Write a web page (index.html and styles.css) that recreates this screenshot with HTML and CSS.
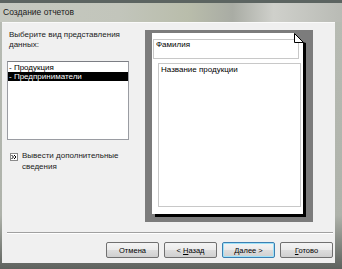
FILE: index.html
```html
<!DOCTYPE html>
<html lang="ru">
<head>
    <meta charset="UTF-8">
    <title>Создание отчетов</title>
    <link rel="stylesheet" href="styles.css">
</head>
<body>
    <div class="window">
        <div class="titlebar">Создание отчетов</div>
        <div class="client">
            <div class="main">
                <div class="left">
                    <div class="prompt">Выберите вид представления данных:</div>
                    <ul class="listbox">
                        <li>- Продукция</li>
                        <li class="selected">- Предприниматели</li>
                    </ul>
                    <div class="more">
                        <span class="more-btn">
                            <svg width="8" height="8" viewBox="0 0 8 8">
                                <path d="M1.5 2 L3.5 4 L1.5 6 M4 2 L6 4 L4 6" fill="none" stroke="#000" stroke-width="1"/>
                            </svg>
                        </span>
                        <span class="more-text">Вывести дополнительные сведения</span>
                    </div>
                </div>
                <div class="preview">
                    <div class="paper">
                        <div class="field-head">Фамилия</div>
                        <div class="field-body">Название продукции</div>
                    </div>
                    <!-- folded corner of the page -->
                    <svg class="dog-ear" width="16" height="18" viewBox="0 0 16 18">
                        <polygon points="2,3 14,3 14,13 11,12" fill="#7c7c7c"/>
                        <polygon points="2.5,3.5 2.5,12.5 11.5,12.5" fill="#fff" stroke="#000" stroke-width="1"/>
                    </svg>
                </div>
            </div>
            <div class="separator"></div>
            <div class="buttons">
                <button>Отмена</button>
                <button>&lt; <u>Н</u>азад</button>
                <button class="default"><u>Д</u>алее &gt;</button>
                <button><u>Г</u>отово</button>
            </div>
        </div>
    </div>
</body>
</html>
```

FILE: styles.css
```css
body {
    margin: 0;
    font-family: "Liberation Sans", Arial, sans-serif;
    font-size: 8px;
    color: #000;
}
.window {
    width: 342px;
    height: 269px;
    display: flex;
    flex-direction: column;
    background: linear-gradient(180deg, #b8bcb4 0%, #aeb2aa 80%, #5e625e 100%);
}
.titlebar {
    height: 19px;
    line-height: 19px;
    border-top: 3px solid #5c6461;
    padding-left: 3px;
    font-size: 8.5px;
    color: #1a1a1a;
    background: linear-gradient(90deg, #c5c8c0 0%, #c2c5bb 35%, #b9bdab 55%, #a9aca4 68%, #cfd0cb 80%, #b9bbb5 100%);
}
.client {
    flex: 1;
    margin: 0 7px 6px 2px;
    background: #f0f0f0;
    border-top: 1px solid #fafafa;
    display: flex;
    flex-direction: column;
}
.main {
    display: flex;
    gap: 16px;
    padding: 7px 0 0 5px;
}
.left {
    width: 122px;
}
.prompt {
    margin-left: 2px;
    line-height: 10px;
    width: 120px;
    color: #1a1a1a;
}
.listbox {
    list-style: none;
    margin: 11px 0 0;
    padding: 1px 0 0;
    height: 79px;
    box-sizing: border-box;
    background: #fff;
    border: 1px solid #9a9ca2;
    border-top-color: #7c7e84;
}
.listbox li {
    line-height: 9px;
    padding-left: 1px;
}
.listbox li.selected {
    background: #000;
    color: #fff;
}
.more {
    display: flex;
    margin-top: 10px;
}
.more-btn {
    width: 8px;
    height: 8px;
    margin: 3px 4px 0 3px;
    box-sizing: border-box;
    border: 1px solid #8a8a8a;
    background: #fff;
    display: flex;
}
.more-btn svg {
    margin: -1px;
}
.more-text {
    line-height: 11px;
    width: 110px;
    color: #222;
}
.preview {
    position: relative;
    width: 168px;
    height: 192px;
    box-sizing: border-box;
    padding: 3px 10px 8px 7px;
    background: #7c7c7c;
}
.paper {
    height: 181px;
    box-sizing: border-box;
    padding-top: 6px;
    background: #fff;
    box-shadow: 3px 3px 0 #000;
}
.field-head {
    width: 146px;
    height: 20px;
    box-sizing: border-box;
    margin-left: 1px;
    padding: 0 2px;
    line-height: 10px;
    border: 1px solid #c8c8c8;
}
.field-body {
    width: 143px;
    height: 144px;
    box-sizing: border-box;
    margin: 4px 0 0 6px;
    padding: 1px 2px;
    line-height: 10px;
    border: 1px solid #c8c8c8;
}
.dog-ear {
    position: absolute;
    left: 147px;
    top: 0;
}
.separator {
    margin: 10px 2px 0 5px;
    border-top: 1px solid #a0a0a0;
    border-bottom: 1px solid #fff;
}
.buttons {
    display: flex;
    justify-content: flex-end;
    gap: 5px;
    margin-top: 8px;
    padding-right: 2px;
}
button {
    width: 53px;
    height: 16px;
    padding: 0;
    font-family: "Liberation Sans", Arial, sans-serif;
    font-size: 7.5px;
    color: #000;
    border: 1px solid #707070;
    border-radius: 2px;
    background: linear-gradient(180deg, #f4f4f4 0%, #ebebeb 48%, #dddddd 52%, #cfcfcf 100%);
}
button.default {
    border-color: #3c7fb1;
    box-shadow: inset 0 0 0 1px #9fe2f8;
}
```
